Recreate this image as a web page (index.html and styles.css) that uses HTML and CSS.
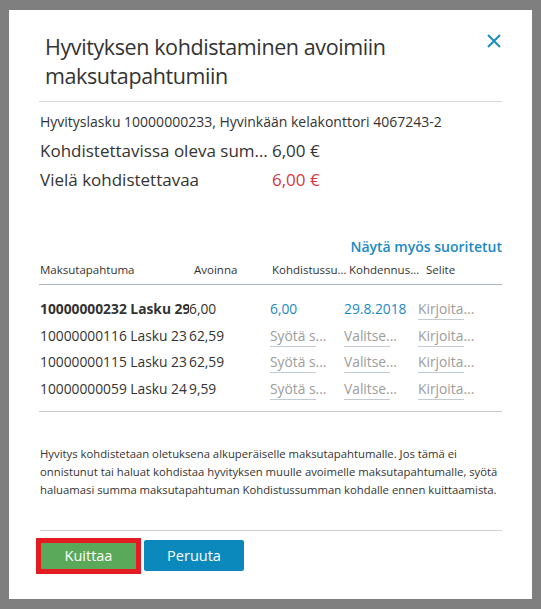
FILE: index.html
```html
<html>
    <head>
        <title>Hyvityksen kohdistaminen</title>
        <link rel="stylesheet" href="styles.css">
    </head>
    <body>
        <div class="dialog">
            <div class="dialog-head">
                <h1 class="dialog-title">Hyvityksen kohdistaminen avoimiin maksutapahtumiin</h1>
                <span class="close">
                    <svg width="14" height="14" viewBox="0 0 14 14"><path d="M1 1 L13 13 M13 1 L1 13" stroke="#1a8cc6" stroke-width="2" fill="none"/></svg>
                </span>
            </div>
            <div class="dialog-body">
                <p class="invoice">Hyvityslasku 10000000233, Hyvinkään kelakonttori 4067243-2</p>
                <div class="sum-row">
                    <span class="sum-label">Kohdistettavissa oleva summa</span>
                    <span class="sum-value">6,00 €</span>
                </div>
                <div class="sum-row">
                    <span class="sum-label">Vielä kohdistettavaa</span>
                    <span class="sum-value red">6,00 €</span>
                </div>
                <div class="show-done"><a>Näytä myös suoritetut</a></div>

                <div class="grid-head">
                    <span>Maksutapahtuma</span>
                    <span>Avoinna</span>
                    <span>Kohdistussumma</span>
                    <span>Kohdennuspäivä</span>
                    <span>Selite</span>
                </div>
                <div class="grid-body">
                    <div class="grid-row bold">
                        <span class="cell-id">10000000232 Lasku 2912</span>
                        <span class="cell-open">6,00</span>
                        <span class="cell-val">6,00</span>
                        <span class="cell-val">29.8.2018</span>
                        <span class="field">Kirjoita...</span>
                    </div>
                    <div class="grid-row">
                        <span class="cell-id">10000000116 Lasku 23</span>
                        <span class="cell-open">62,59</span>
                        <span class="field">Syötä s...</span>
                        <span class="field">Valitse...</span>
                        <span class="field">Kirjoita...</span>
                    </div>
                    <div class="grid-row">
                        <span class="cell-id">10000000115 Lasku 23</span>
                        <span class="cell-open">62,59</span>
                        <span class="field">Syötä s...</span>
                        <span class="field">Valitse...</span>
                        <span class="field">Kirjoita...</span>
                    </div>
                    <div class="grid-row">
                        <span class="cell-id">10000000059 Lasku 24</span>
                        <span class="cell-open">9,59</span>
                        <span class="field">Syötä s...</span>
                        <span class="field">Valitse...</span>
                        <span class="field">Kirjoita...</span>
                    </div>
                </div>
            </div>
            <p class="note">Hyvitys kohdistetaan oletuksena alkuperäiselle maksutapahtumalle. Jos tämä ei<br>onnistunut tai haluat kohdistaa hyvityksen muulle avoimelle maksutapahtumalle, syötä<br>haluamasi summa maksutapahtuman Kohdistussumman kohdalle ennen kuittaamista.</p>
            <div class="dialog-foot">
                <span class="btn-focus"><button class="btn btn-ok">Kuittaa</button></span>
                <button class="btn btn-cancel">Peruuta</button>
            </div>
        </div>
    </body>
</html>
```

FILE: styles.css
```css
body{
    margin: 0;
    padding: 10px 9px;
    height: 609px;
    box-sizing: border-box;
    background-color: #7f7f7f;
    font-family: "Open Sans", "Noto Sans", sans-serif;
    color: #333;
    overflow: hidden;
}
.dialog{
    background-color: #fff;
    height: 589px;
    padding: 0 30px;
    box-sizing: border-box;
}
.dialog-head{
    display: flex;
    align-items: flex-start;
    padding: 22px 1px 11px 6px;
    border-bottom: 1px solid #d6d6d6;
}
.dialog-title{
    flex: 1;
    margin: 0;
    font-size: 21.5px;
    letter-spacing: -0.4px;
    font-weight: normal;
    line-height: 29px;
}
.close{
    display: block;
    width: 14px;
    height: 14px;
    margin-top: 2px;
}
.close svg{
    display: block;
}
.dialog-body{
    padding: 0 0 5px 1px;
    border-bottom: 1px solid #c9c9c9;
}
.invoice{
    margin: 10px 0 4px;
    font-size: 14px;
    line-height: 20px;
}
.sum-row{
    display: grid;
    grid-template-columns: 230px auto;
    column-gap: 2px;
    font-size: 17px;
    line-height: 29px;
}
.sum-label{
    white-space: nowrap;
    overflow: hidden;
    text-overflow: ellipsis;
}
.red{
    color: #d4373e;
}
.show-done{
    text-align: right;
    margin-top: 42px;
    font-size: 14px;
    font-weight: 600;
    line-height: 22px;
}
.show-done a{
    color: #1b8ac3;
}
.grid-head{
    display: grid;
    grid-template-columns: 154px 78px 77px 77px 1fr;
    margin: 4px 0 0 -1px;
    padding-bottom: 6px;
    border-bottom: 1px solid #a9b4be;
    font-size: 11.5px;
    line-height: 16px;
}
.grid-head span{
    white-space: nowrap;
    overflow: hidden;
    text-overflow: ellipsis;
    padding-left: 1px;
}
.grid-body{
    padding-top: 14px;
}
.grid-row{
    display: grid;
    grid-template-columns: 149px 81px 74px 74px 1fr;
    height: 26.7px;
    font-size: 13.8px;
    line-height: 20px;
}
.grid-row span{
    white-space: nowrap;
}
.cell-id{
    overflow: hidden;
}
.bold .cell-id{
    font-weight: bold;
}
.cell-val{
    color: #1b8ac3;
}
.field{
    justify-self: start;
    width: 46px;
    height: 20px;
    border-bottom: 1px solid #c2cad2;
    color: #9d9d9d;
}
.note{
    margin: 33.5px 0 0 1px;
    padding-bottom: 30.5px;
    border-bottom: 1px solid #d3d3d3;
    font-size: 11.3px;
    line-height: 18px;
    white-space: nowrap;
}
.dialog-foot{
    display: flex;
    align-items: center;
    padding-top: 7px;
    margin-left: -3px;
    gap: 3px;
}
.btn-focus{
    display: block;
    border: 5px solid #e31b23;
}
.btn{
    display: block;
    border: 0;
    color: #fff;
    font-family: "Open Sans", "Noto Sans", sans-serif;
    font-size: 14.5px;
}
.btn-ok{
    width: 95px;
    height: 26px;
    background-color: #5aa95a;
}
.btn-cancel{
    width: 100px;
    height: 31px;
    border-radius: 2px;
    background-color: #0b89bd;
}
```
